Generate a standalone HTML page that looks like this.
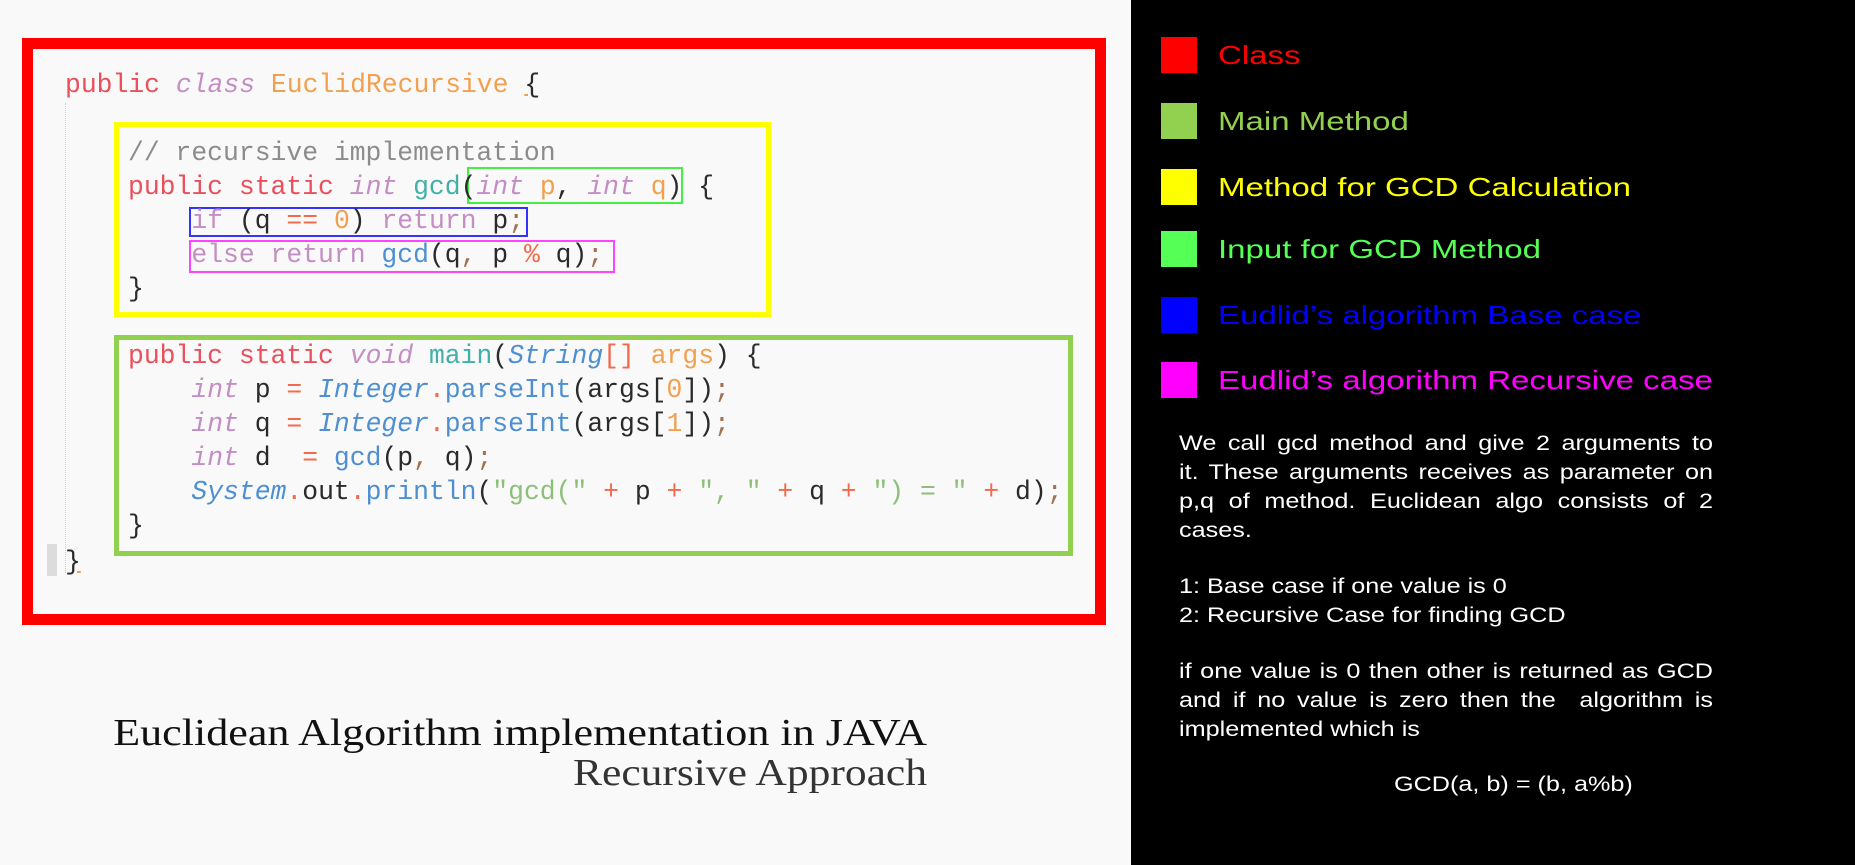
<!DOCTYPE html>
<html><head><meta charset="utf-8"><style>
*{margin:0;padding:0;box-sizing:border-box}
body{width:1855px;height:865px;overflow:hidden;background:#f9f9f9;position:relative;font-family:"Liberation Sans",sans-serif}
.ab{position:absolute}
#right{left:1131px;top:0;width:724px;height:865px;background:#000}
.code{font-family:"Liberation Mono",monospace;font-size:26.4px;line-height:34px;white-space:pre;color:#2a2a2a}
.k{color:#e9505c}.i{color:#c48ec4;font-style:italic}.o{color:#f2a04f}.t{color:#43b0a8}
.c{color:#8c8c8c}.b{color:#4d8fd0}.bi{color:#4d8fd0;font-style:italic}.pl{color:#c48ec4}.op{color:#f26a4c}.s{color:#8cc07a}.sc{color:#a07050}
.sq{position:absolute;left:1161px;width:36px;height:36px}
.lg{position:absolute;left:1218px;font-size:26px;line-height:30px;transform:scaleX(1.27);transform-origin:left;white-space:nowrap}
.para{left:1179px;width:445px;color:#fff;font-size:21px;line-height:29px;transform:scaleX(1.2);transform-origin:left top;white-space:nowrap}
.j{text-align:justify;text-align-last:justify}
</style></head><body>
<div class="ab" style="left:22px;top:38px;width:1084px;height:587px;border:11px solid #ff0000"></div>
<div class="ab" style="left:65px;top:103px;width:0;height:470px;border-left:1px dotted #ccc"></div>
<div class="ab" style="left:47px;top:544px;width:10px;height:32px;background:#dcdcdc"></div>
<div class="ab" style="left:114px;top:122px;width:657px;height:195px;border:5px solid #ffff00"></div>
<div class="ab" style="left:114px;top:335px;width:959px;height:221px;border:5px solid #92d050"></div>
<div class="ab" style="left:467px;top:167px;width:216px;height:37px;border:2px solid #44ee44"></div>
<div class="ab" style="left:189px;top:207px;width:339px;height:30px;border:2px solid #3333ff"></div>
<div class="ab" style="left:189px;top:240px;width:426px;height:33px;border:2px solid #ff44ff"></div>

<div class="ab code" style="left:65px;top:68px"><span class="k">public</span> <span class="i">class</span> <span class="o">EuclidRecursive</span> <span style="text-decoration:underline #f2a04f">{</span></div>
<div class="ab code" style="left:128px;top:136px"><span class="c">// recursive implementation</span>
<span class="k">public static</span> <span class="i">int</span> <span class="t">gcd</span>(<span class="i">int</span> <span class="o">p</span>, <span class="i">int</span> <span class="o">q</span>) {
    <span class="pl">if</span> (q <span class="op">==</span> <span class="o">0</span>) <span class="pl">return</span> p<span class="sc">;</span>
    <span class="pl">else return</span> <span class="b">gcd</span>(q<span class="sc">,</span> p <span class="op">%</span> q)<span class="sc">;</span>
}</div>
<div class="ab code" style="left:128px;top:339px"><span class="k">public static</span> <span class="i">void</span> <span class="t">main</span>(<span class="bi">String</span><span class="op">[]</span> <span class="o">args</span>) {
    <span class="i">int</span> p <span class="op">=</span> <span class="bi">Integer</span><span class="op">.</span><span class="b">parseInt</span>(args[<span class="o">0</span>])<span class="sc">;</span>
    <span class="i">int</span> q <span class="op">=</span> <span class="bi">Integer</span><span class="op">.</span><span class="b">parseInt</span>(args[<span class="o">1</span>])<span class="sc">;</span>
    <span class="i">int</span> d  <span class="op">=</span> <span class="b">gcd</span>(p<span class="sc">,</span> q)<span class="sc">;</span>
    <span class="bi">System</span><span class="op">.</span>out<span class="op">.</span><span class="b">println</span>(<span class="s">"gcd("</span> <span class="op">+</span> p <span class="op">+</span> <span class="s">", "</span> <span class="op">+</span> q <span class="op">+</span> <span class="s">") = "</span> <span class="op">+</span> d)<span class="sc">;</span>
}</div>
<div class="ab code" style="left:65px;top:545px"><span style="text-decoration:underline #f2a04f">}</span></div>

<div class="ab" style="left:112px;top:712px;width:815px;text-align:right;font-family:'Liberation Serif',serif;font-size:38px;line-height:42px;color:#111;white-space:nowrap;transform:scaleX(1.16);transform-origin:right">Euclidean Algorithm implementation in JAVA</div>
<div class="ab" style="left:112px;top:752px;width:815px;text-align:right;font-family:'Liberation Serif',serif;font-size:38px;line-height:42px;color:#333;white-space:nowrap;transform:scaleX(1.145);transform-origin:right">Recursive Approach</div>

<div class="ab" id="right"></div>
<div class="sq" style="top:37px;background:#ff0000"></div><div class="lg" style="top:40px;color:#ff0000">Class</div>
<div class="sq" style="top:103px;background:#92d050"></div><div class="lg" style="top:106px;color:#92d050">Main Method</div>
<div class="sq" style="top:169px;background:#ffff00"></div><div class="lg" style="top:172px;color:#ffff00">Method for GCD Calculation</div>
<div class="sq" style="top:231px;background:#55ff55"></div><div class="lg" style="top:234px;color:#55ff55">Input for GCD Method</div>
<div class="sq" style="top:297px;background:#0000ff"></div><div class="lg" style="top:300px;color:#0000ff">Eudlid’s algorithm Base case</div>
<div class="sq" style="top:362px;background:#ff00ff"></div><div class="lg" style="top:365px;color:#ff00ff">Eudlid’s algorithm Recursive case</div>

<div class="ab para" style="top:429px"><div class="j">We call gcd method and give 2 arguments to</div><div class="j">it. These arguments receives as parameter on</div><div class="j">p,q of method. Euclidean algo consists of 2</div><div>cases.</div></div>
<div class="ab para" style="top:572px"><div>1: Base case if one value is 0</div><div>2: Recursive Case for finding GCD</div></div>
<div class="ab para" style="top:657px"><div class="j">if one value is 0 then other is returned as GCD</div><div class="j">and if no value is zero then the &nbsp;algorithm is</div><div>implemented which is</div></div>
<div class="ab para" style="top:770px;left:1394px;width:300px">GCD(a, b) = (b, a%b)</div>
</body></html>
